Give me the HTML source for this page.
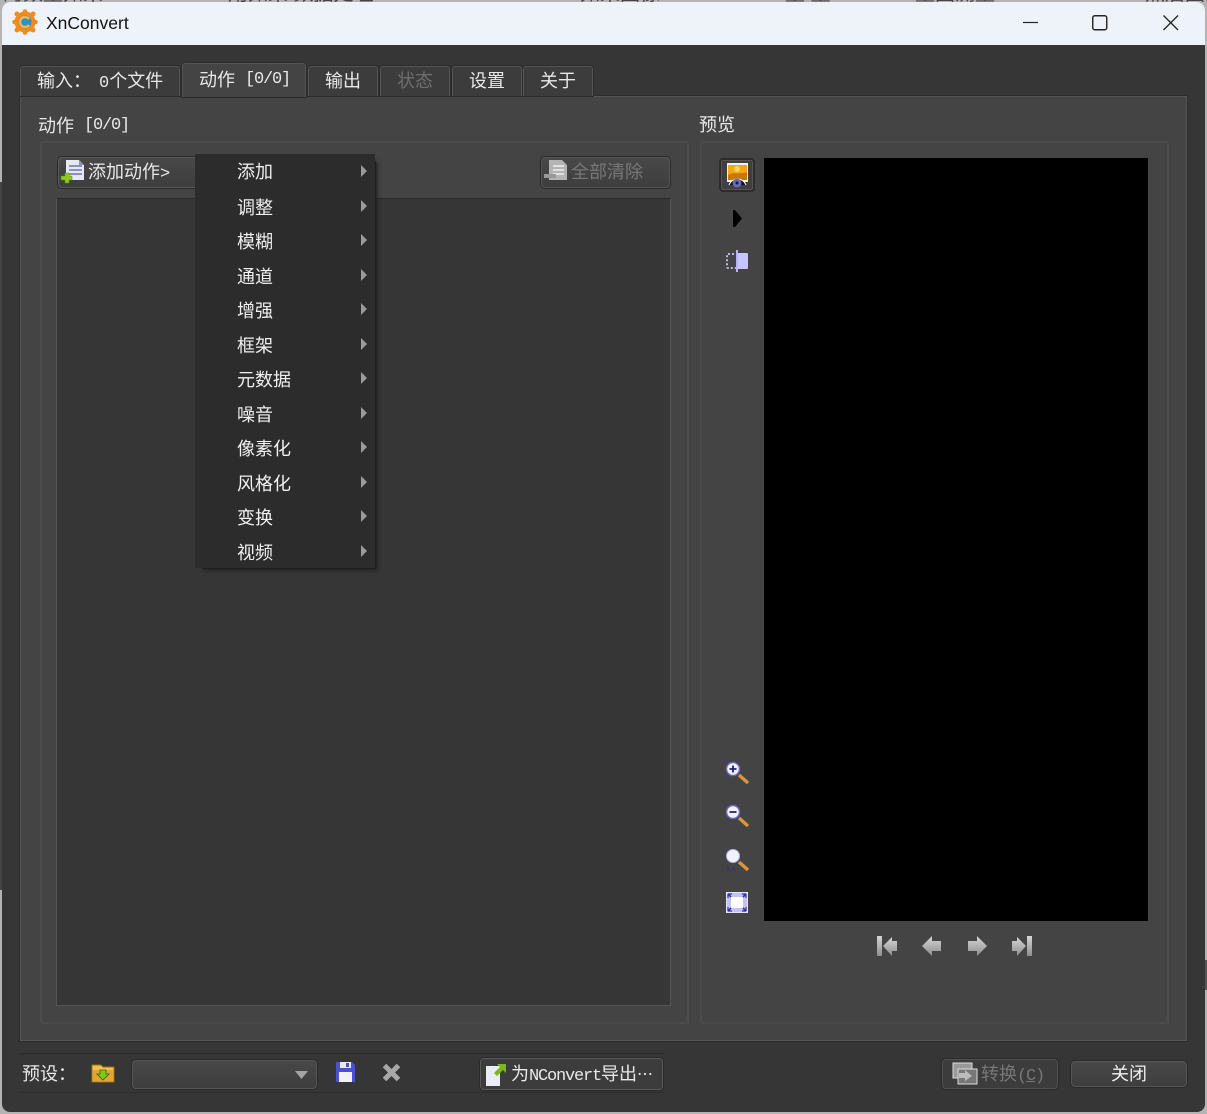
<!DOCTYPE html>
<html><head><meta charset="utf-8">
<style>
html,body{margin:0;padding:0;width:1207px;height:1114px;overflow:hidden;background:#b4b4b4}
*{box-sizing:border-box}
body{font-family:"Liberation Sans","WenQuanYi Zen Hei","Noto Sans CJK SC",sans-serif;font-size:18px;color:#e8e8e8}
.a{position:absolute}
.t{position:absolute;white-space:nowrap;line-height:20px}
.m{font-family:"Liberation Mono",monospace;font-size:17px;letter-spacing:-1.200px}
.tab{position:absolute;background:#3c3c3c;border:1px solid #555;border-bottom:none;border-radius:3px 3px 0 0;text-align:center;line-height:28px;box-shadow:0 0 0 1px #2c2c2c}
.btn{position:absolute;background:linear-gradient(#484848,#3e3e3e);border:1px solid #5a5a5a;border-radius:4px;box-shadow:0 0 0 1px #2a2a2a}
.mi{position:absolute;left:237px;white-space:nowrap;line-height:20px;color:#f0f0f0}
.ar{position:absolute;left:361px;width:0;height:0;border-left:6px solid #9a9a9a;border-top:6px solid transparent;border-bottom:6px solid transparent}
svg{position:absolute;overflow:visible}
</style></head><body>
<div class="a" style="left:0;top:182px;width:2px;height:708px;background:#444"></div>
<div class="a" style="left:1205px;top:960px;width:2px;height:30px;background:#555"></div>
<div class="a" style="left:0;top:0;width:1207px;height:2px;overflow:hidden;color:#444;font-size:20px;line-height:20px;white-space:nowrap">
<div class="a" style="left:3px;top:-16px">的数量如果</div><div class="a" style="left:228px;top:-16px">用如果 数据处理</div><div class="a" style="left:580px;top:-16px">如果图像</div><div class="a" style="left:785px;top:-16px">量 量</div><div class="a" style="left:915px;top:-16px">量图测量</div><div class="a" style="left:1145px;top:-16px">然后图的图如何</div></div>
<div class="a" style="left:2px;top:2px;width:1203px;height:1110px;background:#363636;border-radius:8px 8px 8px 8px;overflow:hidden">
<div class="a" style="left:0;top:0;width:1203px;height:43px;background:#edf3f8"></div>
</div>
<svg style="left:12px;top:9px" width="26" height="26" viewBox="0 0 26 26">
<circle cx="13" cy="13" r="10.500" fill="#f08c1e"/>
<g fill="#f08c1e"><circle cx="5" cy="5" r="2.500"/><circle cx="13" cy="2.500" r="2.300"/><circle cx="21" cy="5" r="2.500"/><circle cx="23.500" cy="13" r="2.300"/><circle cx="21" cy="21" r="2.500"/><circle cx="13" cy="23.500" r="2.300"/><circle cx="5" cy="21" r="2.500"/><circle cx="2.500" cy="13" r="2.300"/></g>
<circle cx="13" cy="13" r="6.500" fill="#2a93c4"/>
<path d="M17 10a5 5 0 1 0 0 6" fill="none" stroke="#f5b45a" stroke-width="2.400"/>
</svg>
<div class="t" style="left:46px;top:13px;color:#111;font-size:17.500px">XnConvert</div>
<svg style="left:1023px;top:16px" width="16" height="12"><path d="M0 6.500H15" stroke="#222" stroke-width="1.200"/></svg>
<svg style="left:1092px;top:15px" width="16" height="16"><rect x="0.750" y="0.750" width="14" height="14" rx="2" fill="none" stroke="#222" stroke-width="1.400"/></svg>
<svg style="left:1163px;top:15px" width="16" height="16"><path d="M0.500 0.500L15 15M15 0.500L0.500 15" stroke="#222" stroke-width="1.300"/></svg>

<div class="a" style="left:20px;top:96px;width:1167px;height:945px;background:#444;border:1px solid #555;box-shadow:0 0 0 1px #2c2c2c"></div>
<div class="tab" style="left:20px;top:66px;width:160px;height:30px;text-align:left;padding-left:16px">输入：<span class="t" style="left:78px;top:4px"><span class="m" style="letter-spacing:0">0</span>个文件</span></div>
<div class="tab" style="left:182px;top:63px;width:124px;height:34px;background:#444;border-bottom:1px solid #444"><span class="t" style="left:16px;top:6px">动作</span><span class="t m" style="left:62px;top:6px">[0/0]</span></div>
<div class="tab" style="left:308px;top:66px;width:70px;height:30px">输出</div>
<div class="tab" style="left:380px;top:66px;width:70px;height:30px;color:#6e6e6e">状态</div>
<div class="tab" style="left:452px;top:66px;width:70px;height:30px">设置</div>
<div class="tab" style="left:523px;top:66px;width:70px;height:30px">关于</div>

<div class="t" style="left:38px;top:116px">动作</div><div class="t m" style="left:84px;top:116px">[0/0]</div>
<div class="t" style="left:699px;top:115px">预览</div>
<div class="a" style="left:40px;top:141px;width:649px;height:883px;border:2px solid #4c4c4c;border-radius:3px"></div>
<div class="a" style="left:700px;top:141px;width:469px;height:883px;border:2px solid #4c4c4c;border-radius:3px"></div>

<div class="btn" style="left:58px;top:157px;width:140px;height:31px"></div>
<svg style="left:60px;top:160px" width="26" height="24" viewBox="0 0 26 24">
<path d="M6 0H19L24 5V20H6Z" fill="#e6e8f4"/><path d="M19 0L24 5H19Z" fill="#8a8fb8"/>
<path d="M9 6H22M9 10H22M9 14H22" stroke="#6a76b0" stroke-width="1.600"/>
<path d="M5 13H9V16H12V20H9V23H5V20H1V16H5Z" fill="#8ccb1e" stroke="#5d8a10" stroke-width=".5"/>
</svg>
<div class="t" style="left:88px;top:162px">添加动作<span class="m">&gt;</span></div>

<div class="btn" style="left:541px;top:157px;width:129px;height:31px;border-color:#555"></div>
<svg style="left:544px;top:160px" width="24" height="22" viewBox="0 0 24 22">
<path d="M5 0H18L23 5V20H5Z" fill="#b4b4b4"/><path d="M9 6H20M9 10H20M9 14H20" stroke="#eee" stroke-width="1.500"/><rect x="0" y="14" width="12" height="4" fill="#999"/>
</svg>
<div class="t" style="left:571px;top:162px;color:#777">全部清除</div>

<div class="a" style="left:56px;top:198px;width:615px;height:808px;background:#363636;border:1px solid #555;border-top-color:#2a2a2a"></div>

<!-- preview -->
<div class="a" style="left:719px;top:158px;width:36px;height:34px;background:#404040;border:2px solid #2c2c2c;border-radius:4px;box-shadow:inset 0 0 0 1px #555"></div>
<svg style="left:726px;top:163px" width="22" height="24" viewBox="0 0 22 24">
<rect x="1" y="0" width="21" height="19" fill="#f0f0f8"/><rect x="2" y="2" width="19" height="15" fill="#f4a810"/><path d="M2 12C8 8 14 12 21 9V17H2Z" fill="#c8760c"/><circle cx="11" cy="6" r="3" fill="#fbd35c"/>
<path d="M3 22C6 14 17 14 20 22" fill="#111" stroke="#fff"/><circle cx="11" cy="20" r="4.500" fill="#6a6ab8"/><circle cx="11" cy="20" r="1.500" fill="#1a1a40"/>
</svg>
<svg style="left:733px;top:210px" width="10" height="17"><path d="M0 0L2 0L9 8.500L2 17L0 17Z" fill="#000"/></svg>
<svg style="left:726px;top:250px" width="23" height="22" viewBox="0 0 23 22">
<rect x="1" y="4" width="11" height="14" rx="1" fill="none" stroke="#b9b5ef" stroke-width="2" stroke-dasharray="2 2"/>
<rect x="11" y="3" width="11" height="16" rx="1" fill="#c8c4ff"/><path d="M11 0V22" stroke="#b9b5ef" stroke-width="2"/>
</svg>
<div class="a" style="left:764px;top:158px;width:384px;height:763px;background:#000"></div>

<svg style="left:725px;top:761px" width="24" height="24" viewBox="0 0 24 24"><path d="M14 14L23 22" stroke="#d9963f" stroke-width="3.400"/><circle cx="8" cy="8" r="6.500" fill="#f2f2ff" stroke="#6c68c8" stroke-width="1.500"/><path d="M4.500 8H11.500M8 4.500V11.500" stroke="#22227a" stroke-width="1.800"/></svg>
<svg style="left:725px;top:804px" width="24" height="24" viewBox="0 0 24 24"><path d="M14 14L23 22" stroke="#d9963f" stroke-width="3.400"/><circle cx="8" cy="8" r="6.500" fill="#f2f2ff" stroke="#6c68c8" stroke-width="1.500"/><path d="M4.500 8H11.500" stroke="#22227a" stroke-width="1.800"/></svg>
<svg style="left:725px;top:848px" width="24" height="24" viewBox="0 0 24 24"><path d="M14 14L23 22" stroke="#d9963f" stroke-width="3.400"/><circle cx="8" cy="8" r="6.500" fill="#f2f2ff" stroke="#b4b2ea" stroke-width="1"/><path d="M3 19V23M6 20V20.500M6 22V22.500M9 19V23" stroke="#2a2a9a" stroke-width="1.200"/></svg>
<svg style="left:726px;top:892px" width="22" height="21" viewBox="0 0 22 21"><rect x=".5" y=".5" width="21" height="20" fill="#c4c2f4" stroke="#e4e4fa"/><rect x="5" y="5" width="12" height="11" fill="#fff"/><path d="M2 2L5 5M20 2L17 5M2 19L5 16M20 19L17 16" stroke="#3232a8" stroke-width="1.600"/><path d="M2 2H6M2 2V6M20 2H16M20 2V6M2 19H6M2 19V15M20 19H16M20 19V15" stroke="#3232a8" stroke-width="1.200"/></svg>

<svg style="left:877px;top:936px" width="20" height="21" viewBox="0 0 20 21"><defs><linearGradient id="g" x1="0" y1="0" x2="0" y2="1"><stop offset="0" stop-color="#d6d6d6"/><stop offset="1" stop-color="#8e8e8e"/></linearGradient></defs><rect x="0" y="0" width="5" height="20" fill="url(#g)"/><path d="M6 10L15 1V5H20V15H15V20Z" fill="url(#g)"/></svg>
<svg style="left:922px;top:936px" width="20" height="21" viewBox="0 0 20 21"><path d="M0 10L10 0V5H19V15H10V20Z" fill="url(#g)"/></svg>
<svg style="left:967px;top:936px" width="20" height="21" viewBox="0 0 20 21"><path d="M20 10L10 0V5H1V15H10V20Z" fill="url(#g)"/></svg>
<svg style="left:1012px;top:936px" width="20" height="21" viewBox="0 0 20 21"><rect x="15" y="0" width="5" height="20" fill="url(#g)"/><path d="M14 10L5 1V5H0V15H5V20Z" fill="url(#g)"/></svg>

<!-- menu -->
<div class="a" style="left:203px;top:161px;width:173px;height:408px;background:#1e1e1e;box-shadow:1px 1px 4px #1c1c1c"></div>
<div class="a" style="left:195px;top:154px;width:180px;height:414px;background:#2c2c2c"></div>
<div class="mi" style="top:162px">添加</div><div class="ar" style="top:165px"></div>
<div class="mi" style="top:198px">调整</div><div class="ar" style="top:200px"></div>
<div class="mi" style="top:232px">模糊</div><div class="ar" style="top:234px"></div>
<div class="mi" style="top:267px">通道</div><div class="ar" style="top:269px"></div>
<div class="mi" style="top:301px">增强</div><div class="ar" style="top:303px"></div>
<div class="mi" style="top:336px">框架</div><div class="ar" style="top:338px"></div>
<div class="mi" style="top:370px">元数据</div><div class="ar" style="top:372px"></div>
<div class="mi" style="top:405px">噪音</div><div class="ar" style="top:407px"></div>
<div class="mi" style="top:439px">像素化</div><div class="ar" style="top:441px"></div>
<div class="mi" style="top:474px">风格化</div><div class="ar" style="top:476px"></div>
<div class="mi" style="top:508px">变换</div><div class="ar" style="top:510px"></div>
<div class="mi" style="top:543px">视频</div><div class="ar" style="top:545px"></div>

<!-- bottom -->
<div class="a" style="left:20px;top:1053px;width:645px;height:40px;border-top:1px solid #2c2c2c;border-bottom:1px solid #2c2c2c"></div>
<div class="t" style="left:22px;top:1064px">预设：</div>
<svg style="left:92px;top:1063px" width="22" height="20" viewBox="0 0 22 20"><path d="M0 2H9L11 4H22V19H0Z" fill="#f2c04e" stroke="#9a6c14"/><path d="M1 7H21V18H1Z" fill="#e2a436"/><path d="M8 7H14V11H17L11 17L5 11H8Z" fill="#7ecb14" stroke="#2a6a08" stroke-width=".8"/></svg>
<div class="btn" style="left:132px;top:1060px;width:185px;height:29px;border-color:#555"></div>
<svg style="left:295px;top:1071px" width="14" height="9"><path d="M0 0H13L6.500 8Z" fill="#a4a4a4"/></svg>
<svg style="left:336px;top:1062px" width="20" height="21" viewBox="0 0 20 21"><path d="M0 0H16L19 3V20H0Z" fill="#4a52c8"/><rect x="4" y="0" width="11" height="6" fill="#e8e8f4"/><rect x="10" y="1" width="3" height="4" fill="#4a52c8"/><rect x="3" y="10" width="13" height="10" fill="#f2f2f8"/></svg>
<svg style="left:382px;top:1063px" width="19" height="19"><path d="M2.500 2.500L16.500 16.500M16.500 2.500L2.500 16.500" stroke="#a8a8a8" stroke-width="5"/></svg>
<div class="btn" style="left:480px;top:1058px;width:183px;height:32px;background:#3c3c3c"></div>
<svg style="left:486px;top:1062px" width="20" height="24" viewBox="0 0 20 24"><path d="M0 4H14V24H0Z" fill="#ebedf6"/><path d="M8 11L14 5L11 2H20V11L17 8L11 14Z" fill="#7ab81c"/></svg>
<div class="t" style="left:511px;top:1064px">为<span class="m">NConvert</span>导出<span style="font-size:16px">⋯</span></div>

<div class="btn" style="left:942px;top:1059px;width:116px;height:30px;background:#3c3c3c;border-color:#505050"></div>
<svg style="left:953px;top:1063px" width="24" height="21" viewBox="0 0 24 21"><rect x="0" y="0" width="19" height="15" fill="#999" stroke="#ddd"/><rect x="5" y="6" width="19" height="15" fill="#777" stroke="#ddd"/><path d="M6 10H12V7L19 13L12 18V15H6Z" fill="#bbb"/></svg>
<div class="t" style="left:981px;top:1064px;color:#777">转换<span class="m">(<u>C</u>)</span></div>
<div class="btn" style="left:1071px;top:1061px;width:116px;height:26px;border-color:#555"></div>
<div class="t" style="left:1111px;top:1064px;color:#f0f0f0">关闭</div>
</body></html>
